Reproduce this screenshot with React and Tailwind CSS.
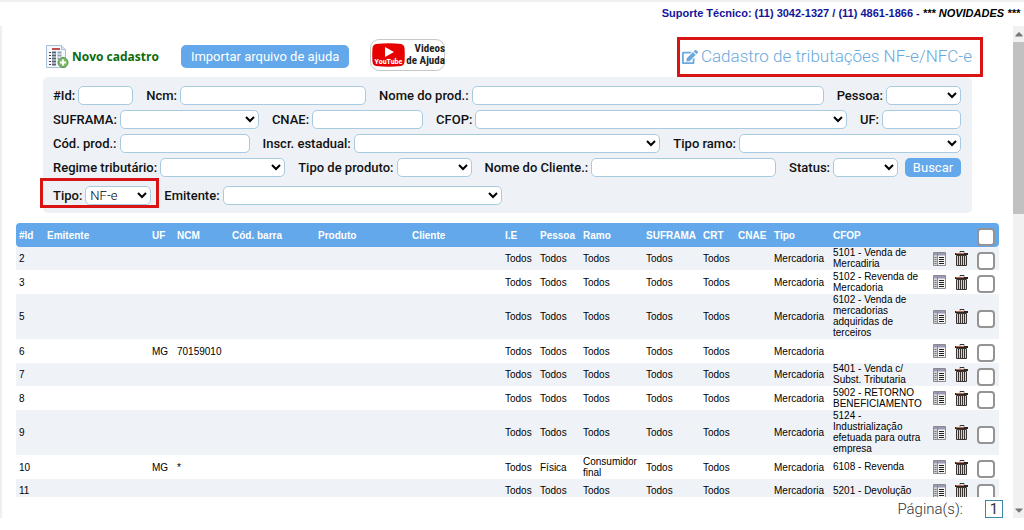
import React from 'react';
import { FaEdit, FaCaretUp, FaCaretDown } from 'react-icons/fa';

const columns = [
  { label: '#Id', width: 'w-[28px]' },
  { label: 'Emitente', width: 'w-[105px]' },
  { label: 'UF', width: 'w-[25px]' },
  { label: 'NCM', width: 'w-[55px]' },
  { label: 'Cód. barra', width: 'w-[86px]' },
  { label: 'Produto', width: 'w-[94px]' },
  { label: 'Cliente', width: 'w-[93px]' },
  { label: 'I.E', width: 'w-[35px]' },
  { label: 'Pessoa', width: 'w-[43px]' },
  { label: 'Ramo', width: 'w-[63px]' },
  { label: 'SUFRAMA', width: 'w-[57px]' },
  { label: 'CRT', width: 'w-[35px]' },
  { label: 'CNAE', width: 'w-[36px]' },
  { label: 'Tipo', width: 'w-[59px]' },
  { label: 'CFOP', width: 'w-[100px]' },
];

const rows = [
  { id: 2, cfop: '5101 - Venda de Mercadiria' },
  { id: 3, cfop: '5102 - Revenda de Mercadoria' },
  { id: 5, cfop: '6102 - Venda de mercadorias adquiridas de terceiros' },
  { id: 6, uf: 'MG', ncm: '70159010', cfop: '' },
  { id: 7, cfop: '5401 - Venda c/ Subst. Tributaria' },
  { id: 8, cfop: '5902 - RETORNO BENEFICIAMENTO' },
  { id: 9, cfop: '5124 - Industrialização efetuada para outra empresa' },
  { id: 10, uf: 'MG', ncm: '*', pessoa: 'Física', ramo: 'Consumidor final', cfop: '6108 - Revenda' },
  { id: 11, cfop: '5201 - Devolução' },
];

const control = 'h-[19px] min-w-0 rounded-[5px] border border-[#a9cbe0] bg-white text-[13px] leading-4 font-light text-black';

function Field({ id, label, className, grow }) {
  return (
    <div className={`flex items-center gap-[3px] ${grow ? 'flex-1' : ''}`}>
      <label htmlFor={id} className="whitespace-nowrap">{label}</label>
      <input id={id} type="text" className={`${control} ${className}`} />
    </div>
  );
}

function SelectField({ id, label, className, grow, value = '', children }) {
  return (
    <div className={`relative flex items-center gap-[3px] ${grow ? 'flex-1' : ''}`}>
      <label htmlFor={id} className="whitespace-nowrap">{label}</label>
      <select id={id} defaultValue={value} className={`${control} ${className}`}>
        <option value={value}>{value}</option>
      </select>
      {children}
    </div>
  );
}

function NewRecordIcon() {
  return (
    <svg width="23" height="24" viewBox="0 0 23 24" aria-hidden="true">
      <path d="M.5 .5h15l4 4v18H.5z" fill="#f4f8fc" stroke="#a9bdd4" />
      <path d="M15.500.5v4h4" fill="#dbe7f3" stroke="#a9bdd4" />
      <path d="M6 4h8" stroke="#c0504d" strokeWidth="2" />
      <path d="M3 7.500h2M3 10.500h2M3 13.500h2M3 16.500h2M3 19.500h2" stroke="#444" />
      <path d="M6 7.500h4M6 10.500h4M6 13.500h4M6 16.500h4M6 19.500h4" stroke="#5a6374" strokeWidth="2" />
      <path d="M11.500 7.500h4M11.500 10.500h4M11.500 13.500h2" stroke="#8f9fba" strokeWidth="2" />
      <circle cx="17" cy="17.500" r="5" fill="#7cbb68" stroke="#559547" />
      <path d="M17 14.500v6M14 17.500h6" stroke="#fff" strokeWidth="2" />
    </svg>
  );
}

function DetailsIcon() {
  return (
    <svg width="13" height="14" viewBox="0 0 13 14" aria-hidden="true">
      <path d="M.5 .5h12v13H.5z" fill="#f4f4f2" stroke="#8a8a92" />
      <path d="M1 1h11v2.500H1z" fill="#9a9ab4" />
      <path d="M1 4h3v9H1z" fill="#d3d3d8" />
      <path d="M1.500 5.500h2M1.500 7.500h2M1.500 9.500h2M1.500 11.500h2" stroke="#77777f" />
      <path d="M4.500 1v12" stroke="#8a8a92" />
      <path d="M6 5.500h5M6 7.500h5M6 9.500h5M6 11.500h5" stroke="#222" />
    </svg>
  );
}

function TrashIcon() {
  return (
    <svg width="13" height="15" viewBox="0 0 13 15" aria-hidden="true">
      <path d="M5 1.500V.5h4v1" fill="none" stroke="#333" />
      <path d="M0 2h13v2H0z" fill="#33231f" />
      <path d="M1 2.500h8" stroke="#b5704f" />
      <path d="M1.500 4.500h10v10h-10z" fill="#d6d3cc" stroke="#3a3432" />
      <path d="M3.500 5v9M5.500 5v9M7.500 5v9M9.500 5v9" stroke="#3a3432" />
    </svg>
  );
}

function YoutubeLogo() {
  return (
    <svg width="33" height="24" viewBox="0 0 33 24" className="shrink-0" aria-hidden="true">
      <path d="M4 1Q17-.5 29 1Q32 1.500 32.500 5Q33 12 32.500 19Q32 22.500 29 23Q17 24.500 4 23Q1 22.500.5 19Q0 12 .5 5Q1 1.500 4 1z" fill="#e60000" />
      <path d="M13 4l9 5-9 5z" fill="#fff" />
      <text x="16.500" y="21" textAnchor="middle" fill="#fff" fontSize="8" fontWeight="700" fontFamily="Roboto Condensed, Roboto, sans-serif">YouTube</text>
    </svg>
  );
}

function RowCheckbox({ label }) {
  return (
    <input
      type="checkbox"
      aria-label={label}
      className="block size-[18px] appearance-none rounded-[4px] border-2 border-[#949494] bg-white"
    />
  );
}

function Filters() {
  return (
    <form className="mr-[41px] ml-[41px] flex flex-col gap-[5px] rounded-[5px] bg-[#eef2f7] pt-[9px] pr-[11px] pb-2 pl-[10px] text-[13px] leading-[19px] font-medium text-[#111]">
      <div className="flex gap-[13px]">
        <Field id="id" label="#Id:" className="w-[55px]" />
        <Field id="ncm" label="Ncm:" className="w-[186px]" />
        <Field id="nome-prod" label="Nome do prod.:" className="w-full" grow />
        <SelectField id="pessoa" label="Pessoa:" className="w-[75px]" />
      </div>
      <div className="flex gap-[13px]">
        <SelectField id="suframa" label="SUFRAMA:" className="w-[139px]" />
        <Field id="cnae" label="CNAE:" className="w-[111px]" />
        <SelectField id="cfop" label="CFOP:" className="w-full" grow />
        <Field id="uf" label="UF:" className="w-[79px]" />
      </div>
      <div className="flex gap-[13px]">
        <Field id="cod-prod" label="Cód. prod.:" className="w-[130px]" />
        <SelectField id="inscricao" label="Inscr. estadual:" className="w-full" grow />
        <SelectField id="ramo" label="Tipo ramo:" className="w-[222px]" />
      </div>
      <div className="flex gap-[13px]">
        <SelectField id="regime" label="Regime tributário:" className="w-[125px]" />
        <SelectField id="tipo-produto" label="Tipo de produto:" className="w-[75px]" />
        <Field id="cliente" label="Nome do Cliente.:" className="w-full" grow />
        <div className="flex gap-[7px]">
          <SelectField id="status" label="Status:" className="w-[65px]" />
          <button type="submit" className="h-[19px] w-14 rounded-[5px] bg-[#62a8ea] font-normal text-white">Buscar</button>
        </div>
      </div>
      <div className="flex gap-[13px] pt-1">
        <SelectField id="tipo" label="Tipo:" className="w-[66px]" value="NF-e">
          <span className="pointer-events-none absolute -top-2 -right-2 -bottom-[3px] -left-[13px] border-3 border-[#d81414]" />
        </SelectField>
        <SelectField id="emitente" label="Emitente:" className="w-[279px]" />
      </div>
    </form>
  );
}

function TaxTable() {
  return (
    <table className="w-full table-fixed text-left font-['Liberation_Sans',sans-serif] text-[10px] leading-[11px] text-black">
      <thead>
        <tr className="h-6 text-white">
          {columns.map((column) => (
            <th key={column.label} className={`bg-[#62a8ea] pl-[3px] font-bold whitespace-nowrap first:rounded-l-[4px] ${column.width}`}>
              {column.label}
            </th>
          ))}
          <th className="w-[22px] bg-[#62a8ea]" />
          <th className="w-[22px] bg-[#62a8ea]" />
          <th className="w-[25px] rounded-r-[4px] bg-[#62a8ea] pt-1 pl-[3px]">
            <RowCheckbox label="Selecionar todos" />
          </th>
        </tr>
      </thead>
      <tbody>
        {rows.map((row) => (
          <tr key={row.id} className="h-[23px] odd:bg-[#eff3f8] even:h-6 [&>td]:pl-[3px]">
            <td>{row.id}</td>
            <td />
            <td>{row.uf}</td>
            <td>{row.ncm}</td>
            <td />
            <td />
            <td />
            <td>Todos</td>
            <td>{row.pessoa || 'Todos'}</td>
            <td>{row.ramo || 'Todos'}</td>
            <td>Todos</td>
            <td>Todos</td>
            <td />
            <td>Mercadoria</td>
            <td className="pb-px">{row.cfop}</td>
            <td>
              <button type="button" aria-label="Detalhes" className="block"><DetailsIcon /></button>
            </td>
            <td>
              <button type="button" aria-label="Excluir" className="block"><TrashIcon /></button>
            </td>
            <td className="pt-1">
              <RowCheckbox label={`Selecionar ${row.id}`} />
            </td>
          </tr>
        ))}
      </tbody>
    </table>
  );
}

export default function App() {
  return (
    <div className="flex h-screen flex-col border-t-2 border-[#f0f0f0] bg-white pb-3 font-['Roboto',sans-serif]">
      <div className="h-6 pt-[3px] pr-1 text-right font-['Liberation_Sans',sans-serif] text-[11px] leading-4 font-bold text-[#14149a]">
        Suporte Técnico: (11) 3042-1327 / (11) 4861-1866 - <a href="#novidades" className="text-black italic">*** NOVIDADES ***</a>
      </div>

      <div className="flex min-h-0 flex-1">
        <main className="flex min-w-0 flex-1 flex-col border-l-2 border-[#efefef]">
          <header className="flex h-[51px] items-center pt-[10px] pr-[30px] pl-11">
            <a href="#novo" className="flex items-center gap-[3px] font-['Open_Sans',sans-serif] text-xs font-bold whitespace-nowrap text-[#0b6b0b]">
              <NewRecordIcon />
              Novo cadastro
            </a>
            <button type="button" className="ml-[22px] h-[23px] rounded-[5px] bg-[#62a8ea] px-[10px] text-[13px] whitespace-nowrap text-white">
              Importar arquivo de ajuda
            </button>
            <a href="#videos" className="-mt-1 ml-[21px] flex h-8 w-[75px] items-center gap-px rounded-[9px] border border-[#c8c8c8] pl-px font-['Roboto_Condensed','Roboto',sans-serif] text-[11px] leading-3 font-bold text-[#222]">
              <YoutubeLogo />
              <span className="text-right whitespace-nowrap">Videos<br />de Ajuda</span>
            </a>
            <h1 className="ml-auto flex h-10 items-center gap-[3px] border-3 border-[#d81414] pr-2 pl-[2px] text-[17px] font-light whitespace-nowrap text-[#6aa9dd]">
              <FaEdit className="size-4" />
              Cadastro de tributações NF-e/NFC-e
            </h1>
          </header>

          <Filters />

          <div className="mt-[10px] min-h-0 flex-1 overflow-hidden pr-[14px] pl-[14px]">
            <TaxTable />
          </div>

          <footer className="flex h-[21px] shrink-0 items-end justify-end gap-[22px] pr-[10px] text-[15px] leading-[18px] font-light text-[#333]">
            <span>Página(s):</span>
            <a href="#pagina-1" className="h-[18px] w-[18px] border border-[#3b87a8] text-center leading-4 font-normal">1</a>
          </footer>
        </main>

        <div className="flex w-[11px] shrink-0 flex-col items-center bg-[#f1f1f1] text-[8px] text-[#777]">
          <FaCaretUp className="h-4 shrink-0" />
          <div className="h-[35%] w-full bg-[#c1c1c1]" />
          <FaCaretDown className="mt-auto h-4 shrink-0" />
        </div>
      </div>
    </div>
  );
}
